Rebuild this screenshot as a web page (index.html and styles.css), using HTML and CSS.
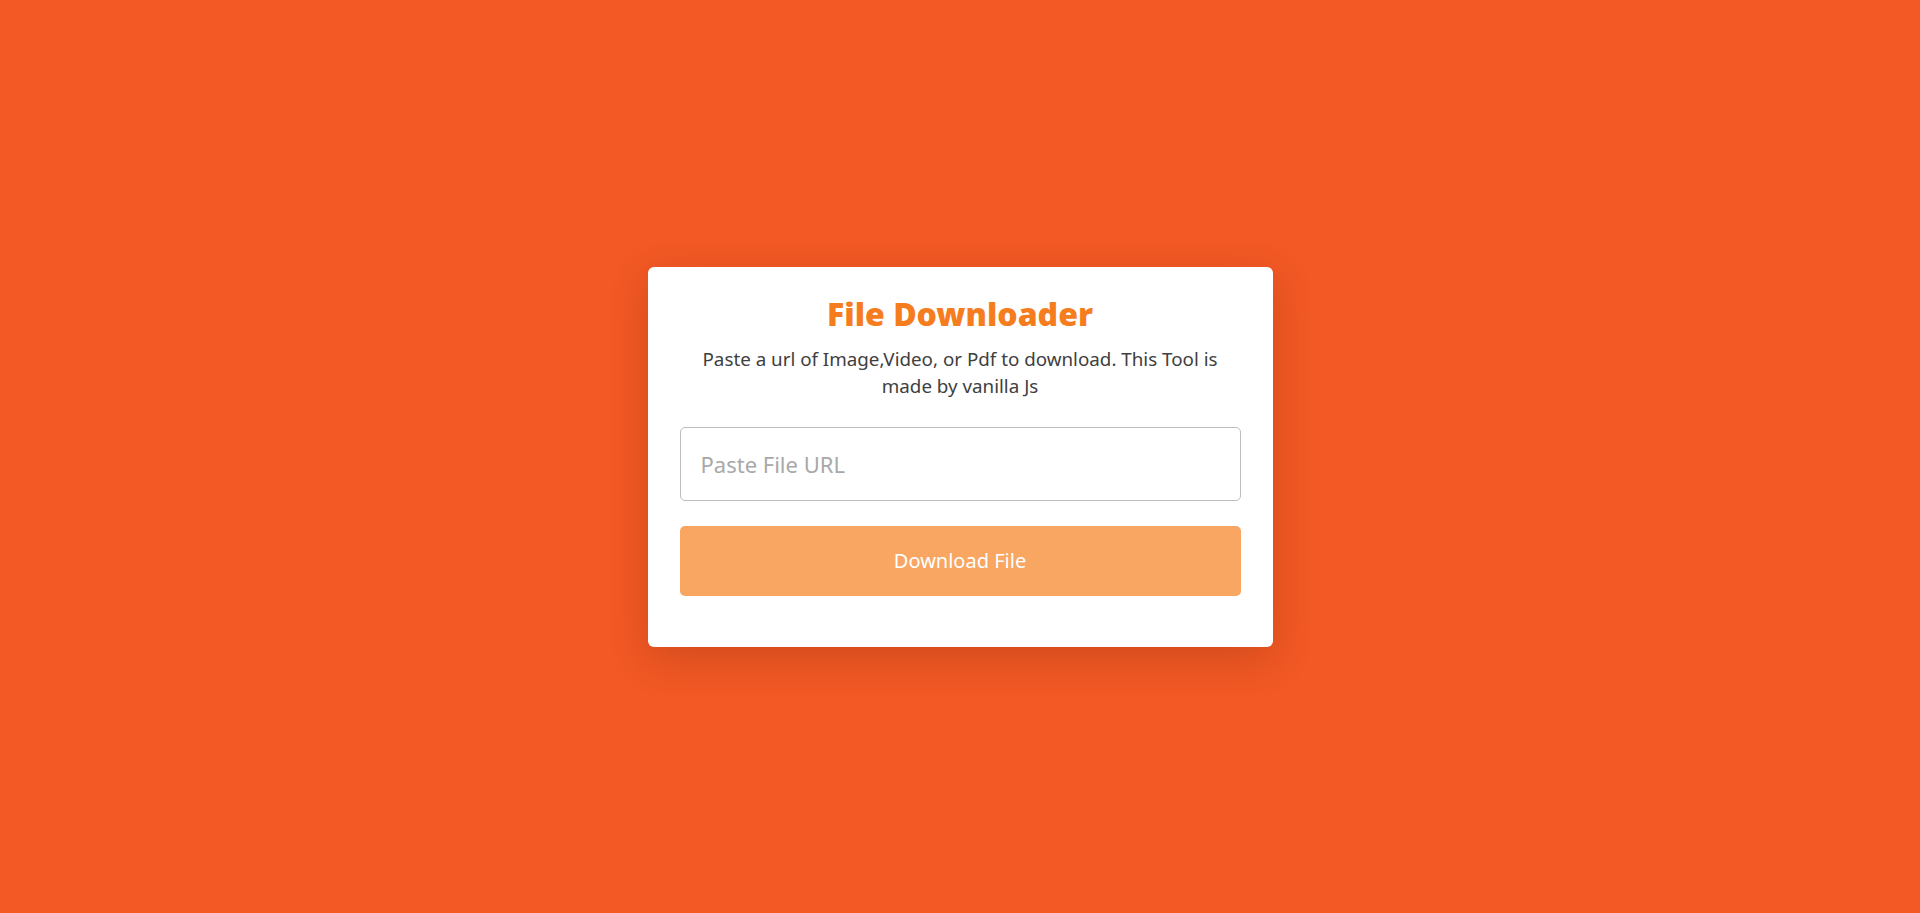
FILE: index.html
```html
<!DOCTYPE html>
<html lang="en">
<head>
<meta charset="utf-8">
<title>File Downloader</title>
<link rel="stylesheet" href="styles.css">
</head>
<body>
<main class="card">
  <h1 class="title">File Downloader</h1>
  <p class="subtitle">Paste a url of Image,Video, or Pdf to download. This Tool is made by vanilla Js</p>
  <input class="url-input" type="text" placeholder="Paste File URL">
  <button class="download-btn" type="button">Download File</button>
</main>
</body>
</html>
```

FILE: styles.css
```css
* { box-sizing: border-box; }
html, body { height: 100%; }
body {
  margin: 0;
  background: #f25924;
  display: flex;
  align-items: center;
  justify-content: center;
  font-family: "Noto Sans", "Open Sans", sans-serif;
}
.card {
  width: 625px;
  background: #fff;
  border-radius: 6px;
  padding: 27px 32px 51px;
  display: flex;
  flex-direction: column;
  box-shadow: 0 12px 40px rgba(80, 20, 0, 0.2);
}
.title {
  margin: 0;
  text-align: center;
  font-size: 32px;
  line-height: 40px;
  font-weight: 900;
  color: #f67d1e;
}
.subtitle {
  margin: 12px 0 0;
  padding: 0 12px;
  text-align: center;
  font-size: 18.8px;
  line-height: 27px;
  color: #404040;
}
.url-input {
  margin-top: 27px;
  height: 74px;
  border: 1px solid #bdbdbd;
  border-radius: 5px;
  padding: 0 20px;
  font-family: inherit;
  font-size: 22px;
  color: #333;
  outline: none;
}
.url-input::placeholder { color: #a8a8a8; }
.download-btn {
  margin-top: 25px;
  height: 70px;
  border: none;
  border-radius: 5px;
  background: #f8a662;
  color: #fff;
  font-family: inherit;
  font-size: 20px;
  cursor: pointer;
}
```
